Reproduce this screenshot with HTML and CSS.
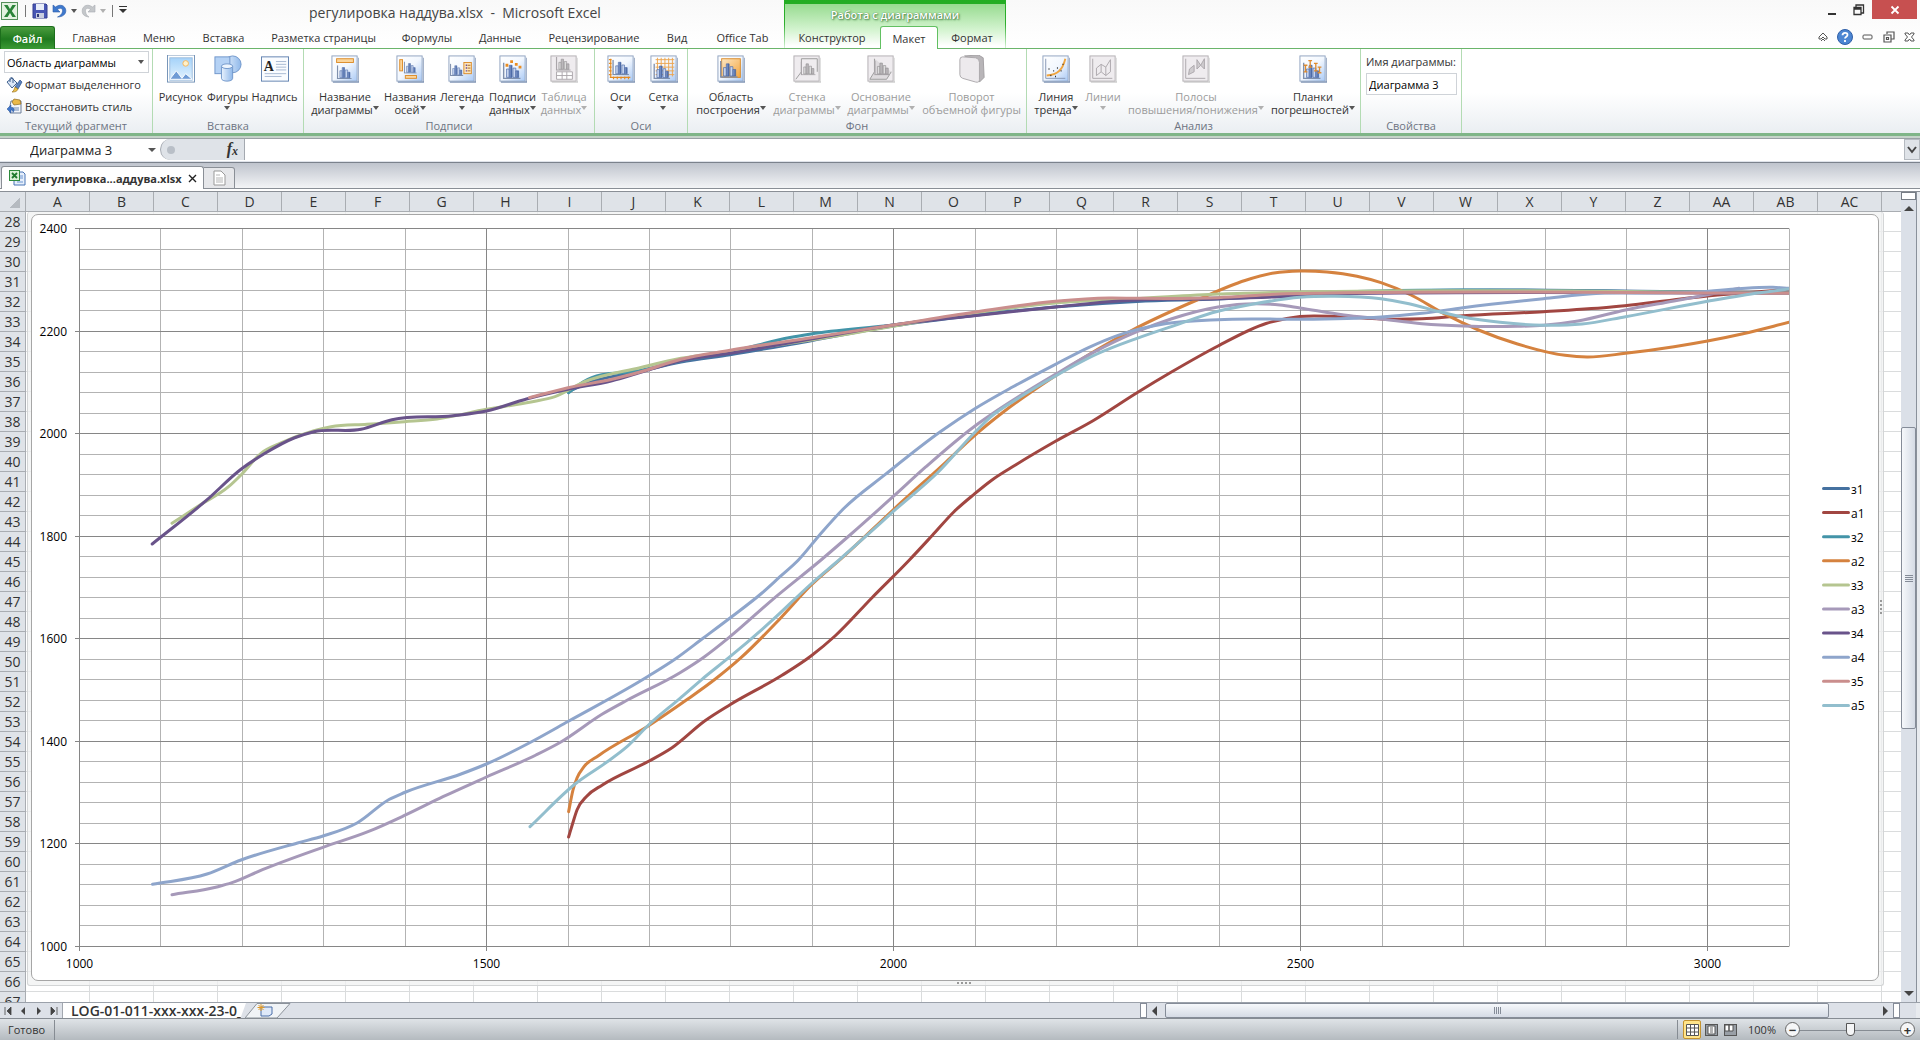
FILE: index.html
```html
<!DOCTYPE html>
<html lang="ru">
<head>
<meta charset="utf-8">
<title>регулировка наддува.xlsx - Microsoft Excel</title>
<link rel="stylesheet" href="styles.css">
</head>
<body>
<svg class="defs" aria-hidden="true">
  <defs>
    <linearGradient id="gTile" x1="0" y1="0" x2="1" y2="1"><stop offset="0" stop-color="#fff"/><stop offset=".5" stop-color="#f2f7fe"/><stop offset="1" stop-color="#a9c9f5"/></linearGradient>
    <linearGradient id="gBar" x1="0" x2="1"><stop offset="0" stop-color="#8fa5d3"/><stop offset="1" stop-color="#3f5f9f"/></linearGradient>
    <linearGradient id="gOrange" x1="0" y1="0" x2="1" y2="1"><stop offset="0" stop-color="#fde7c3"/><stop offset="1" stop-color="#f3a640"/></linearGradient>
    <linearGradient id="gSky" x1="0" y1="0" x2="0" y2="1"><stop offset="0" stop-color="#a5d3fa"/><stop offset="1" stop-color="#e4f3fe"/></linearGradient>
    <linearGradient id="gShape" x1="0" x2="1"><stop offset="0" stop-color="#e8f2fd"/><stop offset="1" stop-color="#8fb8ea"/></linearGradient>
    <symbol id="tile" viewBox="0 0 30 30"><path d="M2 29h28V3" fill="none" stroke="#56709b" stroke-width="1.5" opacity=".75"/><rect x="1" y="1" width="27" height="27" fill="url(#gTile)" stroke="#8da1bf"/></symbol>
    <symbol id="tileOff" viewBox="0 0 30 30"><path d="M2 29h28V3" fill="none" stroke="#bbb" stroke-width="1"/><rect x="1" y="1" width="27" height="27" fill="#efecef" stroke="#b1adb1"/></symbol>
    <symbol id="bars" viewBox="0 0 20 18"><path d="M1 0v17h18" fill="none" stroke="#7f90ad" stroke-width="1.5"/><g stroke="#4766a5" stroke-width=".7"><path d="M4 16V7h3v9z" fill="#c6d4ee"/><path d="M7 16V3h3v13z" fill="url(#gBar)"/><path d="M11 16V6h3v10z" fill="#c6d4ee"/><path d="M14 16V9h3v7z" fill="url(#gBar)"/></g></symbol>
    <symbol id="barsOff" viewBox="0 0 20 18"><path d="M1 0v17h18" fill="none" stroke="#aaa6aa" stroke-width="1.5"/><g stroke="#939093" stroke-width=".8"><path d="M4 16V7h3v9z" fill="#ddd"/><path d="M7 16V3h3v13z" fill="#bbb8bb"/><path d="M11 16V6h3v10z" fill="#ddd"/><path d="M14 16V9h3v7z" fill="#bbb8bb"/></g></symbol>
  </defs>
</svg>

<header class="top">
  <div class="titlebar">
    <div class="quick">
      <svg width="18" height="18" viewBox="0 0 18 18"><rect x=".5" y=".5" width="16" height="17" fill="#e3f2e0" stroke="#55905b"/><path d="M3 3h3.600L9 7l2.400-4H15l-4.200 6 4.200 6h-3.600L9 11l-2.400 4H3l4.200-6z" fill="#2a8438"/></svg>
      <i class="vline"></i>
      <button type="button" aria-label="Сохранить"><svg width="16" height="16" viewBox="0 0 16 16"><path d="M1 1h13l1 1v13H1z" fill="#4856b4" stroke="#353f91"/><path d="M4 1h8v6H4z" fill="#e8edf9"/><path d="M4 10h8v5H4z" fill="#c9cee0"/><path d="M5 11h2v3H5z" fill="#333b77"/></svg></button>
      <button type="button" aria-label="Отменить"><svg width="16" height="16" viewBox="0 0 16 16"><path d="M1 2v7h7L5.500 6.500C8 4.500 11 5 10.500 8.500 10.200 11 8 13 5.500 14 11 14 14 11 13.800 7.500 13.500 2.500 8 .5 3.500 4z" fill="#3f79cd" stroke="#2b5ba8" stroke-width=".6"/></svg><i class="caret"></i></button>
      <button type="button" class="off" aria-label="Вернуть"><svg width="16" height="16" viewBox="0 0 16 16"><path d="M14 2v7H7l2.500-2.500C7 4.500 4 5 4.500 8.500 4.800 11 6 13 8 14 3 13.500 1 11 1.200 7.500 1.500 2.500 7 .5 11.500 4z" fill="#c4c7ca" stroke="#a9adb1" stroke-width=".6"/></svg><i class="caret"></i></button>
      <i class="vline"></i>
      <button type="button" aria-label="Настройка панели"><i class="menu-caret"></i></button>
    </div>
    <h1>регулировка наддува.xlsx&nbsp; -&nbsp; Microsoft Excel</h1>
    <div class="winbtns">
      <button type="button" aria-label="Свернуть"><svg width="10" height="12" viewBox="0 0 10 12"><path d="M1 10h8" stroke="#333" stroke-width="2"/></svg></button>
      <button type="button" aria-label="Восстановить"><svg width="12" height="12" viewBox="0 0 12 12"><path d="M1 3.500h7v7H1zM1 5h7M3 3V1h7.500v8H8" fill="none" stroke="#333" stroke-width="1.300"/></svg></button>
      <button type="button" class="close" aria-label="Закрыть"><svg width="10" height="10" viewBox="0 0 10 10"><path d="M1.500 1.500l7 7M8.500 1.500l-7 7" stroke="#fff" stroke-width="1.800"/></svg></button>
    </div>
  </div>
  <div class="context">Работа с диаграммами</div>
  <div class="tabrow">
    <nav class="tabs">
      <button type="button" class="file">Файл</button><i></i>
      <button type="button">Главная</button>
      <button type="button">Меню</button>
      <button type="button">Вставка</button>
      <button type="button">Разметка страницы</button>
      <button type="button">Формулы</button>
      <button type="button">Данные</button>
      <button type="button">Рецензирование</button>
      <button type="button">Вид</button>
      <button type="button">Office Tab</button>
      <button type="button">Конструктор</button>
      <button type="button" class="active">Макет</button>
      <button type="button">Формат</button>
    </nav>
    <div class="docbtns">
      <button type="button" aria-label="Свернуть ленту"><svg width="10" height="10" viewBox="0 0 10 10"><path d="M1 5l4-4 4 4v2H7L5 5 3 7H1zM3 9l2-2 2 2" fill="none" stroke="#555"/></svg></button>
      <button type="button" aria-label="Справка"><svg width="16" height="16" viewBox="0 0 16 16"><circle cx="8" cy="8" r="7.500" fill="#4c86d2" stroke="#2f5fa8"/><path d="M5.500 6.300C5.500 3 10.700 3 10.500 6 10.400 7.800 8 7.600 8 9.600M8 11v2" fill="none" stroke="#fff" stroke-width="1.800"/></svg></button>
      <button type="button" aria-label="Свернуть окно"><svg width="12" height="8" viewBox="0 0 12 8"><rect x="1" y="2" width="9" height="4" rx="1" fill="none" stroke="#555"/></svg></button>
      <button type="button" aria-label="Восстановить окно"><svg width="12" height="12" viewBox="0 0 12 12"><path d="M4 3V1h7v7H8M1 4h7v7H1zM3.500 6.500h2v2h-2z" fill="none" stroke="#555" stroke-width="1.200"/></svg></button>
      <button type="button" aria-label="Закрыть окно"><svg width="11" height="10" viewBox="0 0 11 10"><path d="M1 1h3l1.500 2L7 1h3v1L7.500 5 10 8v1H7L5.500 7 4 9H1V8l2.500-3L1 2z" fill="none" stroke="#555"/></svg></button>
    </div>
  </div>
</header>

<section class="ribbon">
  <div class="group g-current">
    <div class="stack">
      <div class="selectbox"><select aria-label="Элемент диаграммы"><option>Область диаграммы</option></select><i class="caret"></i></div>
      <button type="button" class="line"><svg width="17" height="17" viewBox="0 0 17 17"><path d="M1 6l5-4 5 5-5 5z" fill="#dbe7f7" stroke="#40618f"/><path d="M4 6V3c0-2 3-2 3 0v4" fill="none" stroke="#40618f"/><path d="M14 4l2 2-4 7-3-2z" fill="#5a82bd" stroke="#2c4f86" stroke-width=".7"/><path d="M9 11l3 2c-1 3-4 3-6 3 2-1 2-3 3-5z" fill="#eabf4c" stroke="#8f6a1b" stroke-width=".6"/></svg>Формат выделенного</button>
      <button type="button" class="line"><svg width="17" height="17" viewBox="0 0 17 17"><path d="M5 3h10v12H4V8z" fill="#f3f6fb" stroke="#6d7f98"/><path d="M8 1l6 1 1 4-7 1-2-3z" fill="#eab94a" stroke="#8f6a1b" stroke-width=".7"/><path d="M6 10h7M6 12h7" stroke="#6d88b5"/><path d="M1 11l4-4v2.500c3 0 4 2 2 5 0-2-1-2.500-2-2.500V15z" fill="#3f76c9" stroke="#244f94" stroke-width=".5"/></svg>Восстановить стиль</button>
    </div>
    <h2>Текущий фрагмент</h2>
  </div>
  <div class="group g-insert">
    <div class="tools">
      <button type="button"><svg viewBox="0 0 30 30"><rect x=".5" y="0" width="29" height="29" fill="#fff" stroke="#6f8fb5"/><rect x="3" y="3" width="24" height="24" fill="url(#gSky)" stroke="#9cbcdc"/><circle cx="20" cy="9" r="3" fill="#fff1c9" stroke="#f0b35c"/><path d="M3 26l7-9 6 8 4-5 7 6z" fill="#6f9bd5" stroke="#fff"/></svg><span>Рисунок</span></button>
      <button type="button"><svg viewBox="0 0 30 30"><circle cx="20" cy="10" r="9" fill="url(#gShape)" stroke="#6e94c9"/><rect x="1" y="2" width="16" height="18" fill="#b5d2f5" stroke="#6e94c9"/><path d="M8 12v13c0 4 12 4 12 0V12z" fill="url(#gShape)" stroke="#6e94c9"/><ellipse cx="14" cy="12" rx="6" ry="2.500" fill="#edf5fe" stroke="#6e94c9"/></svg><span>Фигуры<br><i class="caret"></i></span></button>
      <button type="button"><svg viewBox="0 0 30 30"><rect x=".5" y="2" width="29" height="26" fill="#fafcff" stroke="#5e7fae"/><text x="3" y="17" class="glyph">A</text><path d="M16 7h11M16 10h11M16 13h11M16 16h11M4 20h23M4 23h18" stroke="#a4b6d1"/></svg><span>Надпись</span></button>
    </div>
    <h2>Вставка</h2>
  </div>
  <div class="group g-labels">
    <div class="tools">
      <button type="button"><svg viewBox="0 0 30 30"><use href="#tile"/><rect x="6" y="4" width="18" height="4" fill="#fbd59b" stroke="#dc8b27"/><use href="#bars" x="5" y="11" width="19" height="15"/></svg><span>Название<br>диаграммы<i class="caret"></i></span></button>
      <button type="button"><svg viewBox="0 0 30 30"><use href="#tile"/><rect x="4" y="5" width="3" height="12" fill="#fbd59b" stroke="#dc8b27"/><rect x="10" y="22" width="12" height="3" fill="#fbd59b" stroke="#dc8b27"/><use href="#bars" x="8" y="7" width="15" height="13"/></svg><span>Названия<br>осей<i class="caret"></i></span></button>
      <button type="button"><svg viewBox="0 0 30 30"><use href="#tile"/><use href="#bars" x="2" y="9" width="15" height="14"/><rect x="17" y="8" width="8" height="12" fill="#fde6bd" stroke="#dc8b27"/><path d="M19 11h1.500M19 14h1.500M19 17h1.500" stroke="#6a4ba0" stroke-width="1.500"/><path d="M21 11h3M21 14h3M21 17h3" stroke="#a5661a"/></svg><span>Легенда<br><i class="caret"></i></span></button>
      <button type="button"><svg viewBox="0 0 30 30"><use href="#tile"/><use href="#bars" x="3" y="8" width="22" height="18"/><path d="M7 11h3M12 7h3M17 10h3M21 13h3" stroke="#e98d22" stroke-width="3"/></svg><span>Подписи<br>данных<i class="caret"></i></span></button>
      <button type="button" class="off" disabled><svg viewBox="0 0 30 30"><use href="#tileOff"/><use href="#barsOff" x="5" y="2" width="19" height="15"/><path d="M7 18h17v8H7zM7 22h17M13 18v8M18 18v8" fill="#fff" stroke="#aaa6aa"/></svg><span>Таблица<br>данных<i class="caret"></i></span></button>
    </div>
    <h2>Подписи</h2>
  </div>
  <div class="group g-axes">
    <div class="tools">
      <button type="button"><svg viewBox="0 0 30 30"><use href="#tile"/><use href="#bars" x="5" y="5" width="20" height="17"/><path d="M4 4v20M3 24h22M2 5h3M2 9h3M2 13h3M2 17h3M2 21h3M7 23v3M11 23v3M15 23v3M19 23v3M23 23v3" stroke="#e58a20" fill="none" stroke-width="1.200"/></svg><span>Оси<br><i class="caret"></i></span></button>
      <button type="button"><svg viewBox="0 0 30 30"><use href="#tile"/><path d="M6 5h20M6 9h20M6 13h20M6 17h20M6 21h20M8 3v20M12 3v20M16 3v20M20 3v20M24 3v20" stroke="#eda54d"/><use href="#bars" x="3" y="9" width="20" height="17"/></svg><span>Сетка<br><i class="caret"></i></span></button>
    </div>
    <h2>Оси</h2>
  </div>
  <div class="group g-back">
    <div class="tools">
      <button type="button"><svg viewBox="0 0 30 30"><use href="#tile"/><rect x="5" y="4" width="20" height="20" fill="url(#gOrange)" stroke="#d98b2b"/><use href="#bars" x="3" y="6" width="20" height="19"/></svg><span>Область<br>построения<i class="caret"></i></span></button>
      <button type="button" class="off" disabled><svg viewBox="0 0 30 30"><use href="#tileOff"/><path d="M9 4h17v14M9 4v14L3 26" fill="none" stroke="#999"/><use href="#barsOff" x="6" y="7" width="21" height="15"/></svg><span>Стенка<br>диаграммы<i class="caret"></i></span></button>
      <button type="button" class="off" disabled><svg viewBox="0 0 30 30"><use href="#tileOff"/><path d="M8 4v14L3 26h18l5-8" fill="#dedbde" stroke="#999"/><use href="#barsOff" x="6" y="6" width="21" height="16"/></svg><span>Основание<br>диаграммы<i class="caret"></i></span></button>
      <button type="button" class="off" disabled><svg viewBox="0 0 30 30"><path d="M7 1l15-1 5 3 1 21-5 5-3-22z" fill="#b8b5b8" stroke="#a19ea1"/><path d="M2 5q0-3 3-3l14 1q4 1 4 5v18q0 4-4 3L5 25q-3-1-3-4z" fill="#edeaed" stroke="#aaa7aa"/></svg><span>Поворот<br>объемной фигуры</span></button>
    </div>
    <h2>Фон</h2>
  </div>
  <div class="group g-analysis">
    <div class="tools">
      <button type="button"><svg viewBox="0 0 30 30"><use href="#tile"/><path d="M4 4v21h21" fill="none" stroke="#8496b4"/><path d="M5 22C17 21 22 16 25 4" fill="none" stroke="#efa43f" stroke-width="2"/><path d="M7 15h1M12 17h1M16 14h1M9 22h1M20 17h1M22 10h1M14 23h1" stroke="#222" stroke-width="1.500"/></svg><span>Линия<br>тренда<i class="caret"></i></span></button>
      <button type="button" class="off" disabled><svg viewBox="0 0 30 30"><use href="#tileOff"/><path d="M4 4v21h21M8 22v-8l5-4 5 3 5-8v13l-5 4-5-4zM13 10v8M18 13v9" fill="none" stroke="#aaa6aa"/></svg><span>Линии<br><i class="caret"></i></span></button>
      <button type="button" class="off" disabled><svg viewBox="0 0 30 30"><use href="#tileOff"/><path d="M4 4v21h21" fill="none" stroke="#aaa6aa"/><path d="M7 21l1-6 5-4v7zM16 5l4 6 4-7v11l-4-4-4 4z" fill="#cfcccf" stroke="#aaa6aa"/></svg><span>Полосы<br>повышения/понижения<i class="caret"></i></span></button>
      <button type="button"><svg viewBox="0 0 30 30"><use href="#tile"/><use href="#bars" x="3" y="8" width="22" height="18"/><path d="M5 11h4M7 11v7M5 18h4M10 6h4M12 6v7M10 13h4M16 9h4M18 9v8M16 17h4M20 13h4M22 13v6M20 19h4" stroke="#df8b2e" stroke-width="1.400"/></svg><span>Планки<br>погрешностей<i class="caret"></i></span></button>
    </div>
    <h2>Анализ</h2>
  </div>
  <div class="group g-props">
    <div class="stack"><label for="chartName">Имя диаграммы:</label><input id="chartName" type="text" value="Диаграмма 3"></div>
    <h2>Свойства</h2>
  </div>
</section>

<section class="formula">
  <input class="namebox" type="text" aria-label="Имя" value="Диаграмма 3"><button type="button" class="namearrow" aria-label="Список имён"><i class="caret big"></i></button>
  <div class="fxpart"><i class="knob"></i><button type="button" aria-label="Вставить функцию"><em>f<sub>x</sub></em></button></div>
  <input class="fxinput" type="text" aria-label="Строка формул">
  <button type="button" class="expand" aria-label="Развернуть"><svg width="10" height="10" viewBox="0 0 10 10"><path d="M1 2l4 5 4-5" fill="none" stroke="#444" stroke-width="2"/></svg></button>
</section>

<nav class="doctabs">
  <div class="doctab"><svg width="17" height="16" viewBox="0 0 17 16"><path d="M5 2h9l2 2v11H5z" fill="#e6effb" stroke="#4974b5"/><path d="M11 6h3M11 8h3M8 12h6" stroke="#6c95d0"/><rect x=".5" y=".5" width="10" height="10" fill="#d9f0d7" stroke="#2e8a3c"/><path d="M3 3l5 5M8 3L3 8" stroke="#1f7a2e" stroke-width="1.800"/></svg><span>регулировка...аддува.xlsx</span><button type="button" aria-label="Закрыть"><svg width="9" height="9" viewBox="0 0 9 9"><path d="M1 1l7 7M8 1L1 8" stroke="#222" stroke-width="1.400"/></svg></button></div>
  <button type="button" class="newdoc" aria-label="Создать"><svg width="13" height="16" viewBox="0 0 13 16"><path d="M1 1h7l4 4v10H1z" fill="#fff" stroke="#999"/><path d="M3 5h4M3 8h7M3 10h7M3 12h7" stroke="#b5b5b5"/></svg></button>
</nav>

<main class="sheet">
  <div class="corner"></div>
  <div class="cols" id="cols"></div>
  <div class="rows" id="rows"></div>
  <div class="cells">
    <div class="frame">
      <div class="chart">
        <svg id="chart" viewBox="32 215 1846 765" role="img" aria-label="Диаграмма 3">
          <defs><clipPath id="plotClip"><rect x="79" y="228" width="1710" height="719"/></clipPath></defs>
          <g id="grid"></g>
          <g id="series" clip-path="url(#plotClip)"></g>
          <g id="legend"></g>
        </svg>
      </div>
      <i class="grip bottom"></i><i class="grip side"></i>
    </div>
  </div>
  <div class="vscroll"><i class="split"></i><button type="button" aria-label="Вверх"><i class="tri up"></i></button><div class="track"><div class="thumb"><i></i></div></div><button type="button" aria-label="Вниз"><i class="tri down"></i></button></div>
</main>

<footer class="sheetbar">
  <div class="nav">
    <button type="button" aria-label="Первый лист"><svg width="8" height="8" viewBox="0 0 8 8"><path d="M1 0v8M7 0L3 4l4 4z" fill="#444" stroke="#444" stroke-width=".8"/></svg></button>
    <button type="button" aria-label="Предыдущий лист"><svg width="8" height="8" viewBox="0 0 8 8"><path d="M6 0L2 4l4 4z" fill="#444"/></svg></button>
    <button type="button" aria-label="Следующий лист"><svg width="8" height="8" viewBox="0 0 8 8"><path d="M2 0l4 4-4 4z" fill="#444"/></svg></button>
    <button type="button" aria-label="Последний лист"><svg width="8" height="8" viewBox="0 0 8 8"><path d="M7 0v8M1 0l4 4-4 4z" fill="#444" stroke="#444" stroke-width=".8"/></svg></button>
  </div>
  <button type="button" class="sheettab">LOG-01-011-xxx-xxx-23-0_</button>
  <button type="button" class="newsheet" aria-label="Вставить лист"><svg width="48" height="16" viewBox="0 0 48 16"><path d="M0 15L12 .5h33L32 15z" fill="#f0f3f6" stroke="#8b929a"/><path d="M16 4h11v7l-3 2h-8z" fill="#dfe9f8" stroke="#4a6ea8"/><path d="M16 1v7M12.500 4.500h7M13.500 2l5 5M18.500 2l-5 5" stroke="#e09a2a"/></svg></button>
  <div class="hscroll"><i class="hsplit"></i><button type="button" aria-label="Влево"><i class="tri left"></i></button><div class="htrack"><div class="hthumb"><i></i></div></div><button type="button" aria-label="Вправо"><i class="tri right"></i></button><i class="hsplit"></i></div>
  <i class="gripend"></i>
</footer>

<div class="status">
  <span class="ready">Готово</span>
  <div class="views">
    <button type="button" class="on" aria-label="Обычный"><svg width="13" height="12" viewBox="0 0 13 12"><path d="M.5.500h12v11H.5zM.5 4h12M.5 8h12M4.500.500v11M8.500.500v11" fill="#fff" stroke="#555"/></svg></button>
    <button type="button" aria-label="Разметка страницы"><svg width="13" height="12" viewBox="0 0 13 12"><rect x=".5" y=".5" width="12" height="11" fill="#999fa6" stroke="#555"/><path d="M3 2h7v8H3z" fill="#fff" stroke="#555"/><path d="M5 4h3M5 6h3M5 8h3" stroke="#666"/></svg></button>
    <button type="button" aria-label="Страничный режим"><svg width="13" height="12" viewBox="0 0 13 12"><rect x=".5" y=".5" width="12" height="11" fill="#999fa6" stroke="#555"/><path d="M1 1h4v6H1zM5 1h4v6H5z" fill="#fff" stroke="#555"/></svg></button>
  </div>
  <span class="pct">100%</span>
  <button type="button" class="round" aria-label="Уменьшить">−</button>
  <input type="range" min="10" max="190" value="100" aria-label="Масштаб">
  <button type="button" class="round" aria-label="Увеличить">+</button>
</div>
<script src="chart.js"></script>
</body>
</html>
```
FILE: styles.css
```css
* { box-sizing: border-box; }
html, body { margin: 0; height: 100%; }
body {
  display: flex; flex-direction: column; overflow: hidden;
  font: 11px/13px "Open Sans", "Noto Sans", sans-serif; color: #333; background: #fff;
}
button, input, select { font: inherit; color: inherit; margin: 0; padding: 0; border: 0; background: none; border-radius: 0; }
button { display: flex; align-items: center; justify-content: center; }
h1, h2 { margin: 0; font-weight: 400; }
svg { display: block; flex: none; }
.defs { position: absolute; width: 0; height: 0; }
.caret { display: inline-block; border: 3px solid transparent; border-top: 4px solid #555; border-bottom: 0; margin-left: 3px; vertical-align: 3px; }
.caret.big { border-width: 4px 4px 0; margin: 0; }
.off { color: #9b9b9b; }
.off .caret { border-top-color: #b0b0b0; }

/* title and tabs */
.top { position: relative; flex: none; background: linear-gradient(#f9f9f9, #fff); border-bottom: 1px solid #6bb56b; }
.titlebar { display: flex; height: 26px; align-items: flex-start; }
.quick { display: flex; align-items: center; gap: 4px; height: 22px; width: 300px; padding-left: 1px; }
.vline { width: 1px; height: 12px; background: #777; margin: 0 2px; }
.menu-caret { border: 4px solid transparent; border-top-color: #333; border-bottom: 0; position: relative; }
.menu-caret::before { content: ""; position: absolute; left: -4px; top: -7px; width: 8px; height: 1px; background: #333; }
h1 { flex: 1; padding-left: 9px; font-size: 14px; line-height: 25px; color: #444; }
.winbtns { display: flex; height: 19px; margin-right: 3px; }
.winbtns button { width: 27px; }
.winbtns .close { width: 45px; background: #c75050; }
.context {
  position: absolute; left: 784px; top: 0; width: 222px; height: 48px; padding-top: 4px; text-align: center;
  border: solid #3fae3f; border-width: 4px 1px 0; border-image: linear-gradient(#22ad22, #2fae2f 50%, #d5f2d5) 4 1 0;
  background: linear-gradient(#97db90, #d5f4d1 60%, #fff 95%);
  font-size: 11px; font-weight: 600; line-height: 14px; color: #fff; text-shadow: 0 0 1px #3d7a3d, 1px 1px 2px #3d7a3d;
}
.tabrow { position: relative; display: flex; justify-content: space-between; height: 22px; }
.tabs { display: grid; grid-template-columns: 55px 4px 70px 60px 69px 131px 76px 70px 118px 48px 83px 96px 58px 68px; white-space: nowrap; }
.tabs .file { color: #fff; font-weight: 600; border-radius: 3px 3px 0 0; background: linear-gradient(#4b9c3e, #1f7a1f 55%, #3b9a35); border: 1px solid #1c6e1c; border-bottom: 0; }
.tabs .active { background: #fff; border: 1px solid #62c062; border-bottom: 0; border-radius: 3px 3px 0 0; height: 23px; }
.docbtns { display: flex; align-items: center; gap: 9px; padding-right: 5px; }

/* ribbon */
.ribbon { display: flex; flex: none; height: 89px; padding-bottom: 3px; border-bottom: 2px solid #c5d3c9; background: linear-gradient(#fff 50%, #e9edf1); box-shadow: inset 0 -3px #7fb588; }
.group { display: flex; flex-direction: column; justify-content: space-between; border-right: 1px solid #b3dbb3; padding: 0 3px; white-space: nowrap; }
.group h2 { text-align: center; font-size: 11px; line-height: 14px; color: #6d7482; }
.g-current { width: 153px; } .g-insert { width: 151px; } .g-labels { width: 291px; } .g-axes { width: 93px; }
.g-back { width: 339px; } .g-analysis { width: 334px; } .g-props { width: 101px; }
.stack { display: flex; flex-direction: column; padding: 2px 0 0 1px; }
.selectbox { display: flex; align-items: center; height: 22px; border: 1px solid #cfd3d8; background: #fff; width: 145px; color: #000; }
.selectbox select { appearance: none; flex: 1; padding-left: 2px; height: 20px; }
.selectbox .caret { margin-right: 4px; }
.line { height: 22px; justify-content: flex-start; gap: 2px; padding-left: 2px; }
.g-props .stack { padding: 6px 1px 0 2px; gap: 5px; }
.g-props input { height: 22px; width: 91px; border: 1px solid #cfd3d8; background: #fff; padding-left: 2px; color: #000; }
.tools { display: grid; padding-top: 6px; }
.tools button { flex-direction: column; justify-content: flex-start; text-align: center; line-height: 13px; }
.tools button svg { width: 30px; height: 28px; margin-bottom: 7px; }
.tools button span { display: block; }
.tools br + .caret { margin: 0; vertical-align: 4px; }
.glyph { font: bold 15px "Liberation Serif", serif; fill: #222; }
.g-insert .tools { grid-template-columns: 49px 45px 49px; }
.g-labels .tools { grid-template-columns: 76px 54px 50px 51px 52px; }
.g-axes .tools { grid-template-columns: 45px 41px; }
.g-back .tools { grid-template-columns: 80px 72px 76px 105px; }
.g-analysis .tools { grid-template-columns: 52px 42px 144px 90px; }

/* formula bar */
.formula { display: flex; flex: none; height: 25px; padding-bottom: 3px; background: #dfe3ea; border-bottom: 1px solid #7b828c; box-shadow: inset 0 22px #fff; border-top: 1px solid #9aa0a6; }
.formula > * { height: 21px; }
.namebox { width: 143px; padding-left: 30px; font-size: 13px; color: #222; background: #fff; }
.namearrow { width: 17px; }
.fxpart { display: flex; align-items: center; justify-content: space-between; width: 85px; padding: 0 6px; border: 1px solid #a4a9b0; border-width: 0 1px; border-radius: 11px 0 0 11px; background: #dfe3e8; }
.knob { width: 8px; height: 8px; border-radius: 4px; background: #b9bfc7; }
.fxpart em { font: italic bold 16px/18px "Liberation Serif", serif; }
.fxpart sub { font-size: 12px; vertical-align: -1px; }
.fxinput { flex: 1; background: #fff; }
.expand { width: 16px; background: #dfe3e8; border: 1px solid #b5bac0; }

/* document tabs */
.doctabs { display: flex; flex: none; align-items: flex-end; height: 29px; padding: 0 0 2px 1px; border-bottom: 1px solid #8a8f96; background: linear-gradient(#bfc4cd, #f3f4f6 25px, #8a8f96 25px, #8a8f96 26px, #fff 26px); }
.doctab { display: flex; align-items: center; justify-content: space-between; width: 203px; height: 23px; padding: 0 6px 0 7px; background: #fff; border: 1px solid #8a8f96; border-bottom: 0; border-radius: 3px 3px 0 0; font-weight: 700; }
.newdoc { width: 31px; height: 22px; border: 1px solid #8a8f96; border-left: 0; background: #e6e7ea; border-radius: 0 3px 0 0; }

/* sheet */
.sheet { display: grid; flex: 1; min-height: 0; grid-template: 20px minmax(0, 1fr) / 26px minmax(0, 1fr) 19px; background: #fff; }
.corner { background: linear-gradient(135deg, #dfe3e8 60%, #b5bac0 60%) 6px 4px / 14px 12px no-repeat #dfe3e8; border: solid #a9adb2; border-width: 0 1px 1px 0; }
.cols { display: flex; overflow: hidden; background: #dfe3e8; border-bottom: 1px solid #a9adb2; font-size: 14px; line-height: 20px; }
.cols span { flex: none; width: 64px; border-right: 1px solid #a9adb2; text-align: center; }
.rows { grid-column: 1; grid-row: 2; overflow: hidden; background: #dfe3e8; border-right: 1px solid #a9adb2; font-size: 14px; line-height: 19px; }
.rows span { display: block; height: 20px; border-bottom: 1px solid #a9adb2; text-align: center; }
.cells {
  position: relative; min-height: 0; overflow: hidden;
  background: repeating-linear-gradient(90deg, transparent 0 63px, #dadcdd 63px 64px), repeating-linear-gradient(transparent 0 19px, #dadcdd 19px 20px), #fff;
}
.frame { position: absolute; inset: 0 17px 16px 1px; padding: 2px 4px 4px 3px; border: 1px solid #d3d5d6; border-top-width: 0; border-radius: 3px; background: rgba(240, 241, 241, .75); }
.chart { height: 100%; border: 1px solid #a6a6a6; border-radius: 7px; background: #fff; overflow: hidden; }
.chart svg { width: 100%; height: 100%; }
.chart text { font-size: 12px; fill: #000; }
.grip { position: absolute; background: radial-gradient(circle, #999 1px, transparent 1px) 0 0 / 4px 4px; }
.grip.bottom { left: 50%; bottom: 0; width: 16px; height: 4px; }
.grip.side { right: 0; top: 50%; width: 4px; height: 16px; }
.minor { stroke: #b3b3b3; }
.major { stroke: #868686; }
.curve { fill: none; stroke-width: 3; stroke-linecap: round; stroke-linejoin: round; }
.vscroll { grid-column: 3; grid-row: 1 / 3; display: flex; flex-direction: column; padding-right: 4px; background: linear-gradient(90deg, #dbe0e8 15px, #8a919b 15px, #8a919b 16px, #e8ebef 16px); }
.vscroll button { height: 17px; }
.split { height: 8px; border: 1px solid #777d85; background: #fff; }
.track { flex: 1; padding-top: 210px; }
.thumb { height: 302px; border: 1px solid #858c98; border-radius: 2px; background: linear-gradient(90deg, #f6f8fb, #d5dbe5); display: grid; place-items: center; }
.thumb i { width: 8px; height: 7px; background: repeating-linear-gradient(#858c98 0 1px, transparent 1px 2px); }
.tri { border: 5px solid transparent; }
.up { border-bottom-color: #444; border-top: 0; } .down { border-top-color: #444; border-bottom: 0; }
.left { border-right-color: #444; border-left: 0; } .right { border-left-color: #444; border-right: 0; }

/* sheet tabs */
.sheetbar { display: flex; flex: none; height: 16px; background: #dde1e8; border-top: 1px solid #9ba1aa; }
.nav { display: flex; width: 63px; justify-content: space-around; border-right: 1px solid #a2a7af; }
.sheettab { width: 183px; background: #fff; font-weight: 600; font-size: 14px; line-height: 14px; justify-content: flex-start; padding-left: 8px; white-space: nowrap; clip-path: polygon(0 0, 100% 0, 97% 100%, 0 100%); }
.newsheet { width: 46px; }
.hscroll { display: flex; width: 760px; margin-left: auto; }
.hscroll button { width: 15px; }
.hsplit { width: 7px; border: 1px solid #858c98; background: #fff; }
.htrack { flex: 1; padding: 0 49px 0 3px; }
.hthumb { height: 15px; border: 1px solid #858c98; border-radius: 2px; background: linear-gradient(#f6f8fb, #d5dbe5); display: grid; place-items: center; }
.hthumb i { width: 7px; height: 7px; background: repeating-linear-gradient(90deg, #858c98 0 1px, transparent 1px 2px); }
.gripend { width: 20px; border-right: 4px solid #e8ebef; }

/* status bar */
.status { display: flex; flex: none; align-items: center; height: 22px; padding-right: 5px; background: linear-gradient(#dfe3e7, #b4babf); border-top: 1px solid #868c93; }
.ready { width: 55px; padding-left: 8px; line-height: 20px; border-right: 1px solid #868c93; }
.views { display: flex; gap: 1px; margin-left: auto; padding-left: 5px; border-left: 1px solid #868c93; }
.views button { width: 18px; height: 19px; }
.views .on { border: 1px solid #c49330; border-radius: 2px; background: #ffe48a; }
.pct { width: 46px; text-align: center; }
.round { width: 15px; height: 15px; border: 1px solid #666; border-radius: 8px; background: #f5f6f7; font-size: 13px; font-weight: 700; line-height: 12px; }
.status input { appearance: none; width: 100px; height: 16px; background: linear-gradient(#868c93, #868c93) 0 8px / 100% 1px no-repeat; }
.status input::-webkit-slider-thumb { appearance: none; width: 9px; height: 13px; border: 1px solid #555; border-radius: 1px 1px 5px 5px; background: #f5f6f7; }
```
FILE: chart.js
```js
const NS = 'http://www.w3.org/2000/svg';
const add = (parent, name, attrs, text) => {
  const el = document.createElementNS(NS, name);
  for (const key in attrs) el.setAttribute(key, attrs[key]);
  if (text !== undefined) el.textContent = text;
  document.getElementById(parent).appendChild(el);
};

// sheet headings
const letters = [...'ABCDEFGHIJKLMNOPQRSTUVWXYZ', 'AA', 'AB', 'AC', ''];
document.getElementById('cols').innerHTML = letters.map(l => `<span>${l}</span>`).join('');
let rows = '';
for (let r = 28; r <= 67; r++) rows += `<span>${r}</span>`;
document.getElementById('rows').innerHTML = rows;

// axes
const px = v => Math.floor(79.5 + (v - 1000) * 0.8142) + 0.5;
const py = v => Math.floor(946.5 - (v - 1000) * 0.51286) + 0.5;
for (let v = 1000; v <= 2400; v += 40)
  if (v % 200) add('grid', 'line', { class: 'minor', x1: 79.5, x2: 1789, y1: py(v), y2: py(v) });
for (let v = 1100; v <= 3100; v += 100)
  if (v % 500) add('grid', 'line', { class: 'minor', x1: px(v), x2: px(v), y1: 228.5, y2: 946.5 });
for (let v = 1000; v <= 2400; v += 200) {
  add('grid', 'line', { class: 'major', x1: 75, x2: 1789, y1: py(v), y2: py(v) });
  add('grid', 'text', { x: 67, y: py(v) + 4.5, 'text-anchor': 'end' }, v);
}
for (let v = 1000; v <= 3000; v += 500) {
  add('grid', 'line', { class: 'major', x1: px(v), x2: px(v), y1: 228.5, y2: 951 });
  add('grid', 'text', { x: px(v), y: 968, 'text-anchor': 'middle' }, v);
}

const series = [
  ['з1', '#4571a0', [568,392,585,384,640,371.5,681,362,730,354.7,811,340.7,893,326,974,315.5,1055,307,1137,301.5,1218,299,1280,296,1340,293,1789,292.5]],
  ['а1', '#a14641', [568.6,837,572.5,824,577,810,587,796,602.4,785,648.6,761.3,672,747.7,705,720.7,730,704.7,782,675.3,811,656,835,636,872,597.7,909.4,560,932,535.7,954,511.7,974,494.3,991,480.7,1015.5,465,1055.5,441.3,1093,420.7,1137,392.7,1171,372.3,1218,346,1266,323.5,1300,316.5,1340,316.7,1381,319,1422,318.7,1463,315.7,1543.5,311.7,1609,307.3,1707.5,296,1789,289.3]],
  ['з2', '#4394a8', [568.5,392.7,583,382,640,370.5,681,361,730,352,790,337.5,811,334,893,325,974,313.5,1055,302,1109,299,1218,298,1300,293.5,1789,293]],
  ['а2', '#d5823f', [568.6,811.7,573,790,577,778,584,766.7,598.4,755.7,648.6,725.7,686,700.3,715,679.3,741,657.7,780,618.7,811,585.3,842,558,893,510,946,462,974,436,1003,412.3,1055.5,375.7,1137,327.7,1197,300,1245,280.5,1274,273,1300,271,1327,272,1357,276.3,1381,282.7,1411,295,1444,313.7,1478.5,330,1517.5,344,1565,355.3,1587,357,1625.5,353.3,1674,346.7,1707.5,341,1743,333.7,1789,322.3]],
  ['з3', '#b5c590', [172,523.3,200,505,228.6,486.7,241,475,261,453.3,281.6,442.7,314,430.7,331,426.7,367,424.3,404.5,421.7,437,419,486.5,409.3,531,402,555,396.7,584,382,640,367.7,681,358.3,730,351.7,811,340,893,326.3,974,313,1055.5,303,1137,298.7,1218,294,1280,292.3,1789,292.5]],
  ['а3', '#a699b9', [172,894.7,218,886.7,232,882.7,262.5,869.7,323,847.3,368,831.7,404,815.7,443,796.7,486.4,777,536,755,560,742.5,602.4,714,627,700.3,680,672.7,704.5,656.7,730,636.7,774,598.3,821,560,850,535,893,496.7,926,466.7,974,426.7,999,409.3,1055.5,374.3,1093,352.7,1137,331.7,1171,319,1218,307,1255,303.7,1280,305,1300,308,1344,315,1381,319,1422,323.7,1463,326,1517.5,326.3,1543.5,325.3,1578,321,1625.5,310,1674,301,1707.5,294.7,1739,288.3]],
  ['з4', '#69538a', [152.2,544,206,500.7,241,469.3,265,453.3,294,438,314,431.7,361,429.3,392,419.7,453,415.7,486.5,411,526.5,399,568,389.3,612,380.7,640,372.5,681,360.7,730,353.3,811,339,893,325,974,315.7,1055.5,307,1109,301.7,1137,300,1218,298.7,1280,296.7,1327,294,1400,293,1789,293]],
  ['а4', '#8ea5cb', [152.5,884.3,207,874,241,860,297.5,843,323,836,357,823,389,799.5,404.5,792.5,461,774,486.4,764,532,741.5,568,721.5,648.6,676,676,658.5,703,638.3,730,618,762,593,780,576.7,798.4,560,819,535.7,844,508.3,885,474.7,941,431.3,974,409.2,1012,387.3,1055.5,364.3,1089,347.3,1118,335.3,1166.5,323.5,1218,319.7,1252,319,1300,319.3,1381,317,1422,313.3,1463,307.7,1543.5,298.7,1600,293.3,1660,293,1700,292,1739,288.7,1773,287.3,1789,288.3]],
  ['з5', '#ca8e8d', [529.4,397.7,568,387.7,612,379.3,640,372,681,359.3,730,350.3,811,337.7,893,325,974,312.3,1055.5,301.3,1109,298,1137,298.3,1218,297.7,1280,294,1330,293,1789,293.3]],
  ['а5', '#92becd', [530,826.7,576,783.3,606.5,762.3,627,746.7,648.6,725,680,698.3,702,679.3,730,656.7,774,618.7,811,584,839,560,866.5,535.7,893,511.7,938,472.3,974,433.3,991,416.7,1015.5,400,1055.5,376,1097,354,1137,338.3,1175,325.3,1218,311.3,1252,304.3,1300,297.3,1335,296.3,1381,298.7,1409,303.7,1439.5,311.7,1463,317,1500,322.3,1543.5,325.3,1582,324,1625.5,316.7,1707.5,301.3,1760,292.7,1789,289]]
];

// cubic segments; each tangent weighs its two neighbour slopes by their spacing
const smooth = flat => {
  const p = [];
  for (let i = 0; i < flat.length; i += 2) p.push([flat[i], flat[i + 1]]);
  const last = p.length - 1;
  const width = i => p[i + 1][0] - p[i][0];
  const slope = i => (p[i + 1][1] - p[i][1]) / width(i);
  const tangent = i => {
    if (i === 0) return slope(0);
    if (i === last) return slope(last - 1);
    return (width(i) * slope(i - 1) + width(i - 1) * slope(i)) / (width(i - 1) + width(i));
  };
  let d = `M${p[0]}`;
  for (let i = 0; i < last; i++) {
    const h = width(i) / 3;
    d += `C${p[i][0] + h},${p[i][1] + h * tangent(i)} ${p[i + 1][0] - h},${p[i + 1][1] - h * tangent(i + 1)} ${p[i + 1]}`;
  }
  return d;
};
series.forEach(([name, color, points], i) => {
  const y = 488.5 + i * 24.1;
  add('series', 'path', { class: 'curve', stroke: color, d: smooth(points) });
  add('legend', 'line', { class: 'curve', stroke: color, x1: 1823.5, x2: 1848.5, y1: y, y2: y });
  add('legend', 'text', { x: 1851, y: y + 5 }, name);
});
```
